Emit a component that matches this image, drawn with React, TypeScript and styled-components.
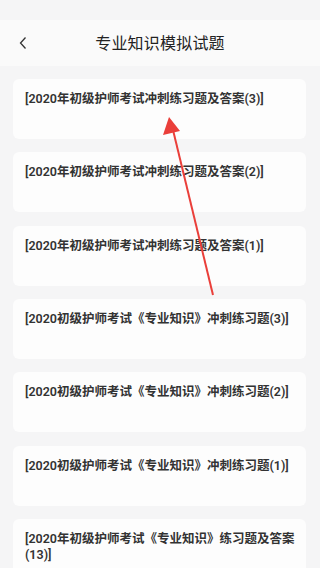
import styled, { createGlobalStyle } from 'styled-components';

const GlobalStyle = createGlobalStyle`
  html, body {
    margin: 0;
    padding: 0;
    background: #f5f5f6;
    font-family: Roboto, "Noto Sans CJK SC", sans-serif;
  }
  * { box-sizing: border-box; }
`;

const Page = styled.div`
  position: relative;
  width: 320px;
  height: 568px;
  overflow: hidden;
  background: #f5f5f6;
`;

const StatusBar = styled.div`
  height: 20px;
`;

const Header = styled.header`
  position: relative;
  height: 46px;
  display: flex;
  align-items: center;
  justify-content: center;
  background: #fafafa;
`;

const BackButton = styled.button`
  position: absolute;
  left: 14px;
  top: 12px;
  width: 18px;
  height: 22px;
  padding: 0;
  border: none;
  background: transparent;
  display: flex;
  align-items: center;
  justify-content: center;
`;

const Title = styled.h1`
  margin: 0;
  margin-top: -2px;
  font-size: 16px;
  font-weight: 400;
  color: #222;
  letter-spacing: 0.2px;
`;

const List = styled.ul`
  list-style: none;
  margin: 0;
  padding: 13px 14px 0 13px;
  display: flex;
  flex-direction: column;
  gap: 13.33px;
`;

const Card = styled.li`
  height: 60px;
  padding: 12px 10px 0 12px;
  background: #fdfdfd;
  border-radius: 6px;
  font-size: 12.5px;
  line-height: 16px;
  font-weight: 600;
  color: #333;
`;

const Arrow = styled.svg`
  position: absolute;
  left: 0;
  top: 0;
  pointer-events: none;
`;

const items = [
  '[2020年初级护师考试冲刺练习题及答案(3)]',
  '[2020年初级护师考试冲刺练习题及答案(2)]',
  '[2020年初级护师考试冲刺练习题及答案(1)]',
  '[2020初级护师考试《专业知识》冲刺练习题(3)]',
  '[2020初级护师考试《专业知识》冲刺练习题(2)]',
  '[2020初级护师考试《专业知识》冲刺练习题(1)]',
  '[2020年初级护师考试《专业知识》练习题及答案(13)]',
];

export default function App() {
  return (
    <Page>
      <GlobalStyle />
      <StatusBar />
      <Header>
        <BackButton aria-label="back">
          <svg width="10" height="14" viewBox="0 0 10 14">
            <path d="M7.5 1.5 L2.5 7 L7.5 12.5" fill="none" stroke="#333" strokeWidth="1.3" />
          </svg>
        </BackButton>
        <Title>专业知识模拟试题</Title>
      </Header>
      <List>
        {items.map((t, i) => (
          <Card key={i}>{t}</Card>
        ))}
      </List>
      <Arrow width="320" height="568" viewBox="0 0 320 568">
        <line x1="213" y1="295" x2="173" y2="130" stroke="#ea3f3a" strokeWidth="2" />
        <polygon points="169,117 163,135 180,131" fill="#ea3f3a" />
      </Arrow>
    </Page>
  );
}
